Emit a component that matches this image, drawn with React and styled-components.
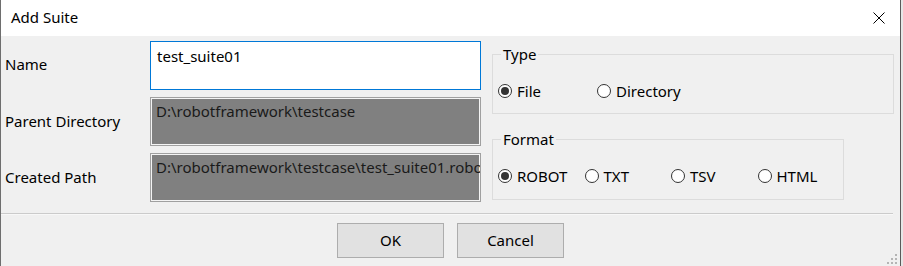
import React from 'react';
import styled, { createGlobalStyle } from 'styled-components';

const GlobalStyle = createGlobalStyle`
  html, body {
    margin: 0;
    padding: 0;
    background: #f0f0f0;
  }
  body {
    font-family: "Noto Sans", "Liberation Sans", sans-serif;
    font-size: 15px;
    color: #000;
  }
  #root {
    width: 903px;
    height: 266px;
    overflow: hidden;
  }
`;

const Screen = styled.div`
  display: flex;
  width: 903px;
  height: 266px;
  background: #e6e6e6;
`;

const Dialog = styled.div`
  width: 899px;
  height: 266px;
  display: flex;
  flex-direction: column;
  background: #f0f0f0;
  border-left: 1px solid #6e6e6e;
  border-right: 1px solid #5a5a5a;
  position: relative;
`;

const TitleBar = styled.div`
  height: 36px;
  flex-shrink: 0;
  display: flex;
  align-items: center;
  justify-content: space-between;
  padding: 0 15px 2px 10px;
  box-sizing: border-box;
  background: #fff;
  line-height: 20px;
`;

const CloseButton = styled.div`
  width: 12px;
  height: 12px;
  display: flex;
  margin-top: 2px;
`;

const Body = styled.div`
  display: flex;
  padding: 5px 0 0 4px;
  height: 177px;
  flex-shrink: 0;
  box-sizing: border-box;
`;

const Fields = styled.div`
  display: flex;
  flex-direction: column;
  gap: 7px;
`;

const FieldRow = styled.div`
  display: flex;
  align-items: center;
  height: 49px;
`;

const Label = styled.div`
  width: 145px;
  line-height: 20px;
  padding-bottom: ${p => p.$lift || 1}px;
`;

const TextBox = styled.div`
  width: 331px;
  height: 49px;
  box-sizing: border-box;
  padding: ${p => (p.$readOnly ? '3px 0 0 5px' : '4px 0 0 6px')};
  line-height: 20px;
  white-space: nowrap;
  overflow: hidden;
  background: ${p => (p.$readOnly ? '#808080' : '#fff')};
  border: 1px solid ${p => (p.$readOnly ? '#a0a0a0' : '#0078d7')};
  box-shadow: ${p => (p.$readOnly ? 'inset 0 0 0 1px #f4f4f4' : 'none')};
  color: ${p => (p.$readOnly ? '#1a1a1a' : '#000')};
`;

const Options = styled.div`
  display: flex;
  flex-direction: column;
  gap: 16px;
  margin-left: 11px;
  padding-top: 4px;
`;

const GroupBox = styled.fieldset`
  width: ${p => p.$width}px;
  box-sizing: border-box;
  margin: 0;
  padding: 18px 0 ${p => p.$bottom}px 5px;
  border: 1px solid #dcdcdc;
  min-inline-size: 0;
`;

const Legend = styled.legend`
  padding: 0 2px;
  margin-left: 3px;
  line-height: 18px;
  font-size: 15px;
`;

const RadioRow = styled.div`
  display: grid;
  grid-template-columns: repeat(${p => p.$count}, ${p => p.$col}px);
  height: 20px;
`;

const RadioItem = styled.label`
  display: flex;
  align-items: center;
  gap: 5px;
  line-height: 20px;
  white-space: nowrap;
`;

const RadioCircle = styled.span`
  width: 14px;
  height: 14px;
  box-sizing: border-box;
  border-radius: 50%;
  border: 1px solid #333;
  background: #fff;
  display: flex;
  align-items: center;
  justify-content: center;
  flex-shrink: 0;

  &::after {
    content: '';
    width: 8px;
    height: 8px;
    border-radius: 50%;
    background: ${p => (p.$checked ? '#333' : 'transparent')};
  }
`;

const Separator = styled.div`
  height: 1px;
  width: 892px;
  background: #cbcbcb;
  border-bottom: 1px solid #f8f8f8;
`;

const Footer = styled.div`
  display: flex;
  justify-content: center;
  gap: 13px;
  padding-top: 8px;
`;

const Button = styled.button`
  width: 107px;
  height: 35px;
  font-family: inherit;
  font-size: 15px;
  color: #000;
  background: #e1e1e1;
  border: 1px solid #adadad;
  padding: 0 0 2px;
`;

const Grip = styled.svg`
  position: absolute;
  right: 3px;
  bottom: 2px;
`;

const Radio = ({ label, checked }) => (
  <RadioItem>
    <RadioCircle $checked={checked} />
    {label}
  </RadioItem>
);

const App = () => (
  <>
    <GlobalStyle />
    <Screen>
      <Dialog>
        <TitleBar>
          <span>Add Suite</span>
          <CloseButton>
            <svg width="12" height="12" viewBox="0 0 12 12">
              <path d="M0.5 0.5 L11.5 11.5 M11.5 0.5 L0.5 11.5" stroke="#000" strokeWidth="1" fill="none" />
            </svg>
          </CloseButton>
        </TitleBar>

        <Body>
          <Fields>
            <FieldRow>
              <Label $lift={3}>Name</Label>
              <TextBox>test_suite01</TextBox>
            </FieldRow>
            <FieldRow>
              <Label>Parent Directory</Label>
              <TextBox $readOnly>D:\robotframework\testcase</TextBox>
            </FieldRow>
            <FieldRow>
              <Label>Created Path</Label>
              <TextBox $readOnly>D:\robotframework\testcase\test_suite01.robot</TextBox>
            </FieldRow>
          </Fields>

          <Options>
            <GroupBox $width={402} $bottom={12}>
              <Legend>Type</Legend>
              <RadioRow $count={2} $col={99}>
                <Radio label="File" checked />
                <Radio label="Directory" />
              </RadioRow>
            </GroupBox>
            <GroupBox $width={352} $bottom={13}>
              <Legend>Format</Legend>
              <RadioRow $count={4} $col={86.5}>
                <Radio label="ROBOT" checked />
                <Radio label="TXT" />
                <Radio label="TSV" />
                <Radio label="HTML" />
              </RadioRow>
            </GroupBox>
          </Options>
        </Body>

        <Separator />

        <Footer>
          <Button>OK</Button>
          <Button>Cancel</Button>
        </Footer>

        <Grip width="10" height="10" viewBox="0 0 10 10">
          <g fill="#b4b4b4">
            <rect x="8" y="0" width="2" height="2" />
            <rect x="4" y="4" width="2" height="2" />
            <rect x="8" y="4" width="2" height="2" />
            <rect x="0" y="8" width="2" height="2" />
            <rect x="4" y="8" width="2" height="2" />
            <rect x="8" y="8" width="2" height="2" />
          </g>
        </Grip>
      </Dialog>
    </Screen>
  </>
);

export default App;
